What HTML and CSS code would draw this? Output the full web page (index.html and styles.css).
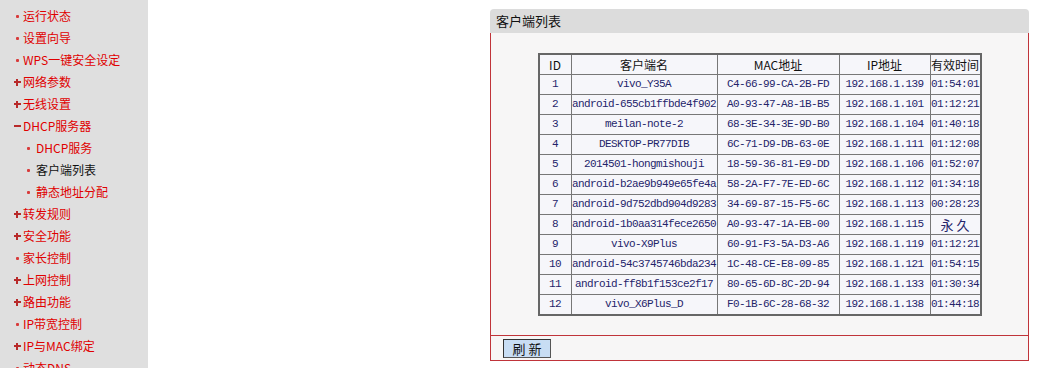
FILE: index.html
```html
<!DOCTYPE html>
<html lang="zh-CN">
<head>
  <meta charset="UTF-8">
  <title>客户端列表</title>
  <link rel="stylesheet" href="styles.css">
</head>
<body>
<div class="menu">
  <ul>
    <li><span class="mk dot"></span>运行状态</li>
    <li><span class="mk dot"></span>设置向导</li>
    <li><span class="mk dot"></span>WPS一键安全设定</li>
    <li><span class="mk plus"></span>网络参数</li>
    <li><span class="mk plus"></span>无线设置</li>
    <li><span class="mk minus"></span>DHCP服务器</li>
    <li class="sub"><span class="mk dot"></span>DHCP服务</li>
    <li class="sub active"><span class="mk dot"></span>客户端列表</li>
    <li class="sub"><span class="mk dot"></span>静态地址分配</li>
    <li><span class="mk plus"></span>转发规则</li>
    <li><span class="mk plus"></span>安全功能</li>
    <li><span class="mk dot"></span>家长控制</li>
    <li><span class="mk plus"></span>上网控制</li>
    <li><span class="mk plus"></span>路由功能</li>
    <li><span class="mk dot"></span>IP带宽控制</li>
    <li><span class="mk plus"></span>IP与MAC绑定</li>
    <li><span class="mk dot"></span>动态DNS</li>
  </ul>
</div>
<div class="main">
  <div class="panel">
    <div class="panel-title">客户端列表</div>
    <div class="panel-body">
      <table class="list">
        <tr class="head">
          <th class="c-id">ID</th>
          <th class="c-name">客户端名</th>
          <th class="c-mac">MAC地址</th>
          <th class="c-ip">IP地址</th>
          <th class="c-time">有效时间</th>
        </tr>
        <tr><td>1</td><td>vivo_Y35A</td><td>C4-66-99-CA-2B-FD</td><td>192.168.1.139</td><td>01:54:01</td></tr>
        <tr><td>2</td><td>android-655cb1ffbde4f902</td><td>A0-93-47-A8-1B-B5</td><td>192.168.1.101</td><td>01:12:21</td></tr>
        <tr><td>3</td><td>meilan-note-2</td><td>68-3E-34-3E-9D-B0</td><td>192.168.1.104</td><td>01:40:18</td></tr>
        <tr><td>4</td><td>DESKTOP-PR77DIB</td><td>6C-71-D9-DB-63-0E</td><td>192.168.1.111</td><td>01:12:08</td></tr>
        <tr><td>5</td><td>2014501-hongmishouji</td><td>18-59-36-81-E9-DD</td><td>192.168.1.106</td><td>01:52:07</td></tr>
        <tr><td>6</td><td>android-b2ae9b949e65fe4a</td><td>58-2A-F7-7E-ED-6C</td><td>192.168.1.112</td><td>01:34:18</td></tr>
        <tr><td>7</td><td>android-9d752dbd904d9283</td><td>34-69-87-15-F5-6C</td><td>192.168.1.113</td><td>00:28:23</td></tr>
        <tr><td>8</td><td>android-1b0aa314fece2650</td><td>A0-93-47-1A-EB-00</td><td>192.168.1.115</td><td class="cjk">永 久</td></tr>
        <tr><td>9</td><td>vivo-X9Plus</td><td>60-91-F3-5A-D3-A6</td><td>192.168.1.119</td><td>01:12:21</td></tr>
        <tr><td>10</td><td>android-54c3745746bda234</td><td>1C-48-CE-E8-09-85</td><td>192.168.1.121</td><td>01:54:15</td></tr>
        <tr><td>11</td><td>android-ff8b1f153ce2f17</td><td>80-65-6D-8C-2D-94</td><td>192.168.1.133</td><td>01:30:34</td></tr>
        <tr><td>12</td><td>vivo_X6Plus_D</td><td>F0-1B-6C-28-68-32</td><td>192.168.1.138</td><td>01:44:18</td></tr>
      </table>
    </div>
    <div class="panel-foot">
      <button class="btn">刷 新</button>
    </div>
  </div>
</div>
</body>
</html>
```

FILE: styles.css
```css
body,div,ul,li,table{margin:0;padding:0;}
ul{list-style-type:none;}
body{display:flex;background:#fff;font:12px/20px "Noto Sans CJK SC",sans-serif;min-height:100vh;}

/* left menu */
.menu{width:148px;flex:none;background:#dfdfdf;padding-top:5px;overflow:hidden;}
.menu li{display:flex;align-items:center;height:22px;padding-left:11px;color:#e00000;white-space:nowrap;}
.menu li.sub{padding-left:21px;}
.menu li.active{color:#111;}
.mk{display:flex;justify-content:center;align-items:center;width:12px;height:22px;flex:none;}
.sub .mk{width:15px;}
.mk.dot::before{content:"";width:3px;height:3px;background:#d83a3a;border-radius:1px;}
.mk.plus{position:relative;}
.mk.plus::before{content:"";width:7px;height:2px;background:#b82a2a;}
.mk.plus::after{content:"";position:absolute;left:5px;top:8px;width:2px;height:7px;background:#b82a2a;}
.mk.minus::before{content:"";width:7px;height:2px;background:#b82a2a;}

/* panel */
.main{flex:1;padding-left:342px;padding-top:9px;}
.panel{width:539px;}
.panel-title{height:24px;line-height:24px;background:#dcdcdc;border-radius:4px 4px 0 0;padding-left:6px;font-size:13px;color:#111;}
.panel-body{background:#f7f6f6;border-left:1px solid #c0343a;border-right:1px solid #c0343a;padding:20px 0 19px;}
.panel-foot{background:#f7f6f6;border:1px solid #c0343a;height:21px;padding:3px 0 0 12px;box-sizing:content-box;}
.btn{display:block;width:48px;height:19px;padding:0;background:#c8ddf4;border:1px solid #333;border-right-color:#555;border-bottom-color:#555;font:13px/17px "Noto Sans CJK SC",sans-serif;color:#111;}

/* client table */
.list{margin:0 auto;border-collapse:collapse;border:2px solid #666;table-layout:fixed;}
.list td,.list th{height:19px;padding:0;border:1px solid #777;background:#f6f6fa;text-align:center;white-space:nowrap;overflow:visible;}
.list th{font:12px/19px "Noto Sans CJK SC",sans-serif;font-weight:normal;color:#111;}
.list td{font:11px/19px "Liberation Mono",monospace;letter-spacing:-0.6px;color:#24246a;}
.list td.cjk{font:13px/19px "Noto Sans CJK SC",sans-serif;letter-spacing:0;}
.c-id{width:31px;}
.c-name{width:145px;}
.c-mac{width:121px;}
.c-ip{width:90px;}
.c-time{width:49px;}
```
